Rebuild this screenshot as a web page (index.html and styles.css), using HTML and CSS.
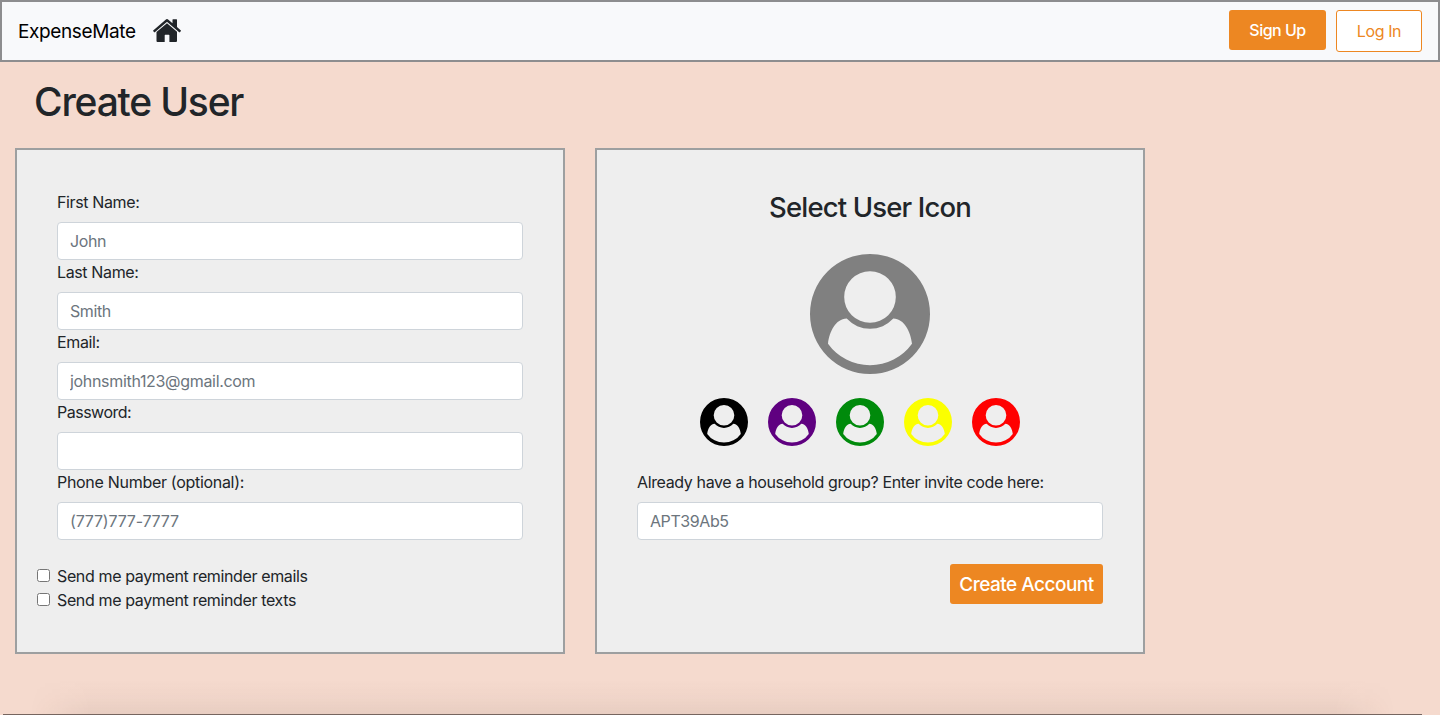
FILE: index.html
```html
<!DOCTYPE html>
<html lang="en">
<head>
<meta charset="utf-8">
<title>ExpenseMate</title>
<link rel="stylesheet" href="styles.css">
</head>
<body>
<svg class="defs" aria-hidden="true">
  <symbol id="user" viewBox="0 0 120 120">
    <path fill-rule="evenodd" d="M60 0a60 60 0 1 1 0 120A60 60 0 1 1 60 0zM60 17.2a25.8 25.8 0 1 0 0 51.6A25.8 25.8 0 1 0 60 17.2zM36.7 64.6C25.500 65 19.600 77.500 18 89.700A51.600 51.600 0 0 0 102 89.700C100.400 77.500 94.500 65 83.300 64.600A31.700 31.700 0 0 1 36.700 64.600z"/>
  </symbol>
</svg>
<nav class="navbar">
  <a class="brand">ExpenseMate</a>
  <svg class="home" viewBox="0 0 28 23">
    <path d="M.2 11.400 12.600.7Q14 -.5 15.400.7L19.500 4.200V.8Q19.500.3 20 .3H23.500Q24 .3 24 .8V8.100L27.900 11.400Q28.200 11.700 27.900 12L26.900 13.200Q26.600 13.500 26.200 13.200L14.500 3.200Q14 2.800 13.500 3.200L1.800 13.200Q1.400 13.500 1.100 13.200L.2 12Q-.1 11.700.2 11.400z"/>
    <path d="M14 4.200 24 12.700V22Q24 23 23 23H16.400V16.200Q16.400 15.700 15.900 15.700H12.200Q11.700 15.700 11.700 16.200V23H4.500Q3.500 23 3.500 22V13.100z"/>
  </svg>
  <div class="nav-actions">
    <button class="btn sign-up">Sign Up</button>
    <button class="btn log-in">Log In</button>
  </div>
</nav>
<h1 class="title">Create User</h1>
<main class="panels">
  <form class="panel">
    <label class="label">First Name:</label>
    <input class="input" placeholder="John">
    <label class="label">Last Name:</label>
    <input class="input" placeholder="Smith">
    <label class="label">Email:</label>
    <input class="input email" placeholder="johnsmith123@gmail.com">
    <label class="label password">Password:</label>
    <input class="input" type="password">
    <label class="label phone">Phone Number (optional):</label>
    <input class="input digits" placeholder="(777)777-7777">
    <div class="checks">
      <label class="check"><input class="box" type="checkbox"><span>Send me payment reminder emails</span></label>
      <label class="check"><input class="box" type="checkbox"><span>Send me payment reminder texts</span></label>
    </div>
  </form>
  <section class="panel">
    <h2 class="subtitle">Select User Icon</h2>
    <svg class="avatar"><use href="#user"/></svg>
    <div class="choices">
      <svg class="choice black"><use href="#user"/></svg>
      <svg class="choice purple"><use href="#user"/></svg>
      <svg class="choice green"><use href="#user"/></svg>
      <svg class="choice yellow"><use href="#user"/></svg>
      <svg class="choice red"><use href="#user"/></svg>
    </div>
    <label class="label">Already have a household group? Enter invite code here:</label>
    <input class="input" placeholder="APT39Ab5">
    <button class="btn create">Create Account</button>
  </section>
</main>
<div class="shade"></div>
<div class="edge"></div>
</body>
</html>
```

FILE: styles.css
```css
* { box-sizing: border-box; }
body {
  position: relative;
  margin: 0;
  height: 715px;
  overflow: hidden;
  background: #f5dace;
  color: #212529;
  font: 16px/24px Inter, "Liberation Sans", sans-serif;
  letter-spacing: -0.37px;
}
.defs { display: none; }
.navbar {
  display: flex;
  align-items: flex-start;
  height: 62px;
  padding: 8px 16px;
  border: 2px solid #8d8d8f;
  background: #f8f9fb;
}
.brand {
  margin-top: 7px;
  width: 119px;
  font-size: 19px;
  line-height: 30px;
  letter-spacing: -0.38px;
  color: #000;
  white-space: nowrap;
}
.home { width: 28px; height: 23px; margin: 9px 0 0 16px; fill: #212529; }
.nav-actions { display: flex; gap: 10px; margin-left: auto; }
.btn {
  margin: 0;
  padding: 0;
  border: 0;
  border-radius: 3px;
  background: #ed8722;
  color: #fff;
  font: inherit;
  font-weight: 500;
  letter-spacing: -0.5px;
}
.sign-up { width: 97px; height: 40px; }
.log-in {
  width: 86px;
  height: 42px;
  border: 1px solid #ed8722;
  background: #fff;
  color: #ed8722;
  font-weight: 400;
  letter-spacing: -0.4px;
}
.title {
  margin: 16px 0 22px 34px;
  font-size: 39px;
  font-weight: 500;
  line-height: 48px;
  letter-spacing: -1.2px;
}
.panels { display: flex; gap: 30px; padding-left: 15px; }
.panel {
  display: flex;
  flex-direction: column;
  width: 550px;
  height: 506px;
  padding: 40px;
  border: 2px solid #9d9fa0;
  background: #eee;
}
.label { height: 32px; white-space: nowrap; }
.password { letter-spacing: -0.5px; }
.phone { letter-spacing: -0.3px; }
.input {
  width: 100%;
  height: 38px;
  padding: 6px 12px;
  border: 1px solid #ced4da;
  border-radius: 4px;
  background: #fff;
  font: inherit;
  letter-spacing: -0.42px;
}
.email { letter-spacing: -0.32px; }
.digits { letter-spacing: -0.2px; }
.input::placeholder { color: #6c757d; opacity: 1; }
.checks { display: flex; flex-direction: column; margin: 24px 0 0 -20px; }
.check { display: flex; align-items: center; gap: 7px; height: 24px; }
.box { flex: none; width: 13px; height: 13px; margin: 0 0 2px; }
.subtitle {
  margin: 0;
  text-align: center;
  font-size: 27.5px;
  font-weight: 500;
  line-height: 34px;
  letter-spacing: -0.85px;
}
.avatar { align-self: center; width: 120px; height: 120px; margin-top: 30px; fill: gray; }
.choices { display: flex; gap: 20px; margin: 24px 0 24px 63px; }
.choice { width: 48px; height: 48px; }
.black { fill: #000; }
.purple { fill: #5f0080; }
.green { fill: #008a0b; }
.yellow { fill: #fbff00; }
.red { fill: #ff0000; }
.create {
  align-self: flex-end;
  width: 153px;
  height: 40px;
  margin-top: 24px;
  padding-top: 1px;
  font-size: 19px;
  letter-spacing: -0.52px;
  white-space: nowrap;
}
.shade {
  position: absolute;
  left: 30px;
  right: 45px;
  bottom: 0;
  height: 36px;
  background: linear-gradient(rgba(60, 35, 25, 0), rgba(60, 35, 25, 0.025) 50%, rgba(60, 35, 25, 0.07));
  -webkit-mask-image: linear-gradient(90deg, transparent, #000 60px, #000 calc(100% - 60px), transparent);
  mask-image: linear-gradient(90deg, transparent, #000 60px, #000 calc(100% - 60px), transparent);
}
.edge {
  position: absolute;
  left: 3px;
  bottom: 0;
  width: 1419px;
  height: 1px;
  background: #76655f;
}
```
